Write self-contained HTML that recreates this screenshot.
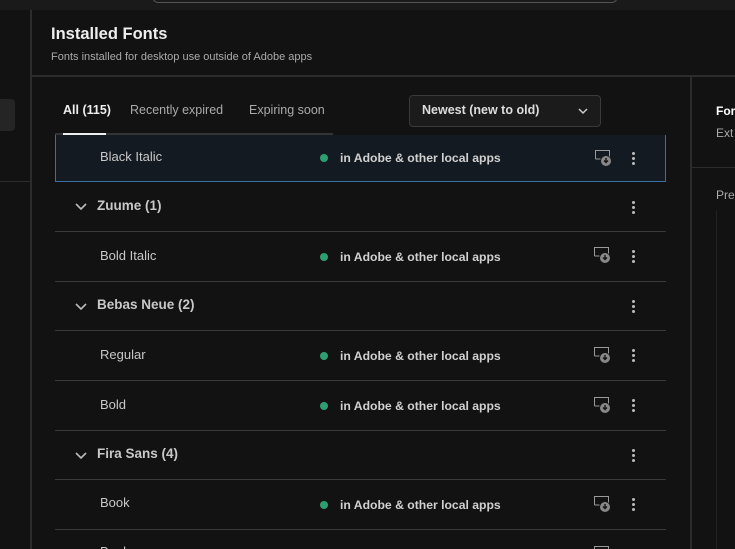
<!DOCTYPE html>
<html><head><style>
*{margin:0;padding:0;box-sizing:border-box}
html{width:735px;height:549px;overflow:hidden}
body{width:735px;height:549px;overflow:hidden;background:#121212;font-family:"Liberation Sans",sans-serif;color:#ccc;position:relative}
.a{position:absolute}
.row{position:absolute;left:55px;width:611px;border-bottom:1px solid #3a3a3a}
.name{position:absolute;left:45px;font-size:13px;color:#c8c8c8}
.grp{position:absolute;left:42px;font-size:13.5px;font-weight:bold;color:#c8c8c8}
.chev{position:absolute;left:19px}
.st{position:absolute;left:285px;font-size:12.2px;font-weight:bold;color:#d0d0d0}
.st:before{content:"";position:absolute;left:-20px;top:3px;width:8px;height:8px;border-radius:50%;background:#2e9e72}
.dots{position:absolute;left:577px;width:3px}
.dots i{display:block;width:3px;height:3px;background:#bbb;border-radius:50%;margin-bottom:2px}
.ic{position:absolute;left:538px}
</style></head><body>
<div class="a" style="left:0;top:0;width:735px;height:10px;background:#1a1a1a"></div>
<div class="a" style="left:152px;top:-10px;width:466px;height:13px;border:1px solid #555;border-radius:8px;background:#1a1a1a"></div>
<div class="a" style="left:30px;top:10px;width:2px;height:539px;background:#2c2c2c"></div>
<div class="a" style="left:0;top:99px;width:15px;height:32px;background:#252525;border-radius:0 4px 4px 0"></div>
<div class="a" style="left:0;top:181px;width:30px;height:1px;background:#2c2c2c"></div>
<div class="a" style="left:51px;top:25px;font-size:16.5px;font-weight:bold;color:#eee">Installed Fonts</div>
<div class="a" style="left:51px;top:51px;font-size:11px;color:#aaa">Fonts installed for desktop use outside of Adobe apps</div>
<div class="a" style="left:32px;top:75px;width:703px;height:2px;background:#2c2c2c"></div>
<div class="a" style="left:690px;top:77px;width:2px;height:472px;background:#2c2c2c"></div>
<div class="a" style="left:716px;top:104px;font-size:12px;font-weight:bold;color:#fff">For</div>
<div class="a" style="left:716px;top:126px;font-size:12px;color:#aaa">Ext</div>
<div class="a" style="left:692px;top:167px;width:43px;height:1px;background:#2c2c2c"></div>
<div class="a" style="left:716px;top:188px;font-size:12px;color:#aaa">Pre</div>
<div class="a" style="left:716px;top:210px;width:1px;height:339px;background:#222"></div>
<div class="a" style="left:63px;top:103px;font-size:12.5px;font-weight:bold;color:#eee">All (115)</div>
<div class="a" style="left:130px;top:103px;font-size:12.5px;color:#aaa">Recently expired</div>
<div class="a" style="left:249px;top:103px;font-size:12.5px;color:#aaa">Expiring soon</div>
<div class="a" style="left:55px;top:133px;width:278px;height:2px;background:#333"></div>
<div class="a" style="left:63px;top:133px;width:43px;height:2px;background:#eee"></div>
<div class="a" style="left:409px;top:95px;width:192px;height:32px;border:1px solid #3a3a3a;border-radius:4px;background:#1b1b1b"></div>
<div class="a" style="left:422px;top:103px;font-size:12.5px;font-weight:bold;color:#ddd">Newest (new to old)</div>
<svg class="a" style="left:577px;top:106px" width="12" height="10"><path d="M2 3l4 4 4-4" stroke="#ccc" stroke-width="1.5" fill="none"/></svg>

<svg width="0" height="0" style="position:absolute"><defs><g id="dl"><path d="M1.5 10V1.5h14v6" stroke="#999" fill="none"/><path d="M1.5 10h5" stroke="#999"/><circle cx="12" cy="12" r="5" fill="#888"/><path d="M12 9v4M10 11.5l2 2 2-2" stroke="#141414" stroke-width="1.4" fill="none"/></g>
<path id="cv" d="M2 4l5 5 5-5" stroke="#bbb" stroke-width="1.6" fill="none"/></defs></svg>

<div class="row" style="top:135px;height:47px;background:#141a21;border:1px solid #3d6ea3;border-top:none"><span class="name" style="top:14px;left:44px">Black Italic</span><span class="st" style="top:16px;left:284px">in Adobe &amp; other local apps</span>
<svg class="ic" style="top:14px" width="18" height="18"><use href="#dl"/></svg>
<div class="dots" style="top:17px;left:576px"><i></i><i></i><i></i></div></div>

<div class="row" style="top:182px;height:50px"><svg class="chev" style="top:18px" width="14" height="12"><use href="#cv"/></svg><span class="grp" style="top:16px">Zuume (1)</span><div class="dots" style="top:19px"><i></i><i></i><i></i></div></div>
<div class="row" style="top:232px;height:50px"><span class="name" style="top:16px">Bold Italic</span><span class="st" style="top:18px">in Adobe &amp; other local apps</span><svg class="ic" style="top:14px" width="18" height="18"><use href="#dl"/></svg><div class="dots" style="top:18px"><i></i><i></i><i></i></div></div>
<div class="row" style="top:282px;height:49px"><svg class="chev" style="top:18px" width="14" height="12"><use href="#cv"/></svg><span class="grp" style="top:15px">Bebas Neue (2)</span><div class="dots" style="top:18px"><i></i><i></i><i></i></div></div>
<div class="row" style="top:331px;height:50px"><span class="name" style="top:16px">Regular</span><span class="st" style="top:18px">in Adobe &amp; other local apps</span><svg class="ic" style="top:15px" width="18" height="18"><use href="#dl"/></svg><div class="dots" style="top:18px"><i></i><i></i><i></i></div></div>
<div class="row" style="top:381px;height:50px"><span class="name" style="top:16px">Bold</span><span class="st" style="top:18px">in Adobe &amp; other local apps</span><svg class="ic" style="top:15px" width="18" height="18"><use href="#dl"/></svg><div class="dots" style="top:18px"><i></i><i></i><i></i></div></div>
<div class="row" style="top:431px;height:49px"><svg class="chev" style="top:18px" width="14" height="12"><use href="#cv"/></svg><span class="grp" style="top:15px">Fira Sans (4)</span><div class="dots" style="top:18px"><i></i><i></i><i></i></div></div>
<div class="row" style="top:480px;height:50px"><span class="name" style="top:15px">Book</span><span class="st" style="top:18px">in Adobe &amp; other local apps</span><svg class="ic" style="top:15px" width="18" height="18"><use href="#dl"/></svg><div class="dots" style="top:18px"><i></i><i></i><i></i></div></div>
<div class="row" style="top:530px;height:19px;border:none;overflow:hidden"><span class="name" style="top:14px">Book</span><svg class="ic" style="top:15px" width="18" height="18"><use href="#dl"/></svg></div>
</body></html>
